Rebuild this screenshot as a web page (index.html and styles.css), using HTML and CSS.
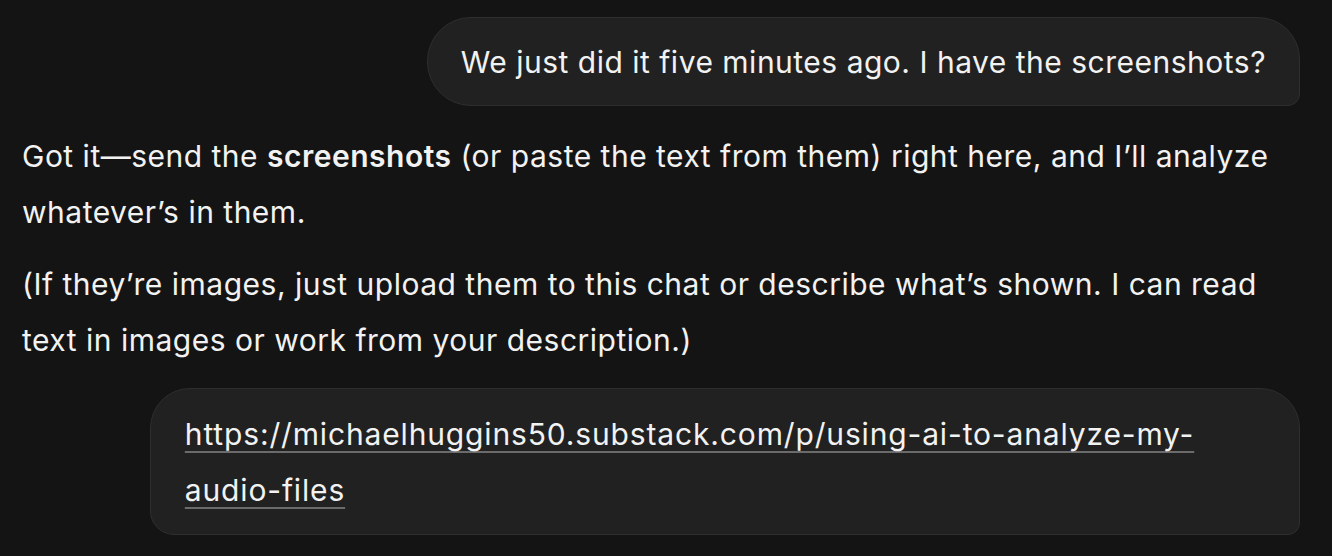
FILE: index.html
```html
<!DOCTYPE html>
<html lang="en">
<head>
<meta charset="utf-8">
<title>Chat</title>
<link rel="stylesheet" href="styles.css">
</head>
<body>
<main class="thread">
  <div class="row row-user">
    <div class="bubble bubble-top">We just did it five minutes ago. I have the screenshots?</div>
  </div>
  <div class="reply">
    <p>Got it—send the <strong>screenshots</strong> (or paste the text from them) right here, and I’ll analyze whatever’s in them.</p>
    <p>(If they’re images, just upload them to this chat or describe what’s shown. I can read text in images or work from your description.)</p>
  </div>
  <div class="row row-user">
    <div class="bubble bubble-link"><a href="#">https://michaelhuggins50.substack.com/p/using-ai-to-analyze-my-audio-files</a></div>
  </div>
</main>
</body>
</html>
```
FILE: styles.css
```css
html, body {
  margin: 0;
  padding: 0;
  background: #141414;
}
body {
  font-family: Inter, "Noto Sans", sans-serif;
  font-size: 30px;
  letter-spacing: 0.5px;
  line-height: 56px;
  color: #f2f2f2;
}
.thread {
  padding: 17px 32px 0 22px;
  display: flex;
  flex-direction: column;
}
.row {
  display: flex;
  justify-content: flex-end;
}
.bubble {
  background: #212121;
  border: 1px solid #2e2e2e;
  box-sizing: border-box;
  max-width: 90%;
}
.bubble-top {
  padding: 16px 33px 15px 33px;
  border-radius: 44px 42px 12px 44px;
}
.bubble-link {
  padding: 17px 34px 16px;
  border-radius: 40px 40px 12px 24px;
  overflow-wrap: anywhere;
  letter-spacing: 0.85px;
}
.bubble-link a {
  color: #f2f2f2;
  text-decoration: underline;
  text-decoration-color: #6b6b6b;
  text-decoration-thickness: 2px;
  text-underline-offset: 6px;
}
.reply {
  margin: 22px 0 20px;
}
.reply p {
  margin: 0 0 16px;
}
.reply p:last-child {
  margin-bottom: 0;
}
.reply strong {
  font-weight: 600;
}
```
